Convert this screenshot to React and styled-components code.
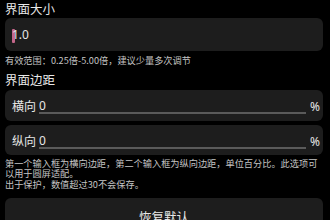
import React from 'react';
import styled, { createGlobalStyle } from 'styled-components';

const Global = createGlobalStyle`
  html, body {
    margin: 0;
    padding: 0;
    background: #000;
  }
  body {
    font-family: "Noto Sans CJK SC", "Noto Sans", sans-serif;
    color: #e6e6e6;
  }
`;

const Page = styled.div`
  display: flex;
  flex-direction: column;
  padding: 1px 7px 0 5px;
  height: 220px;
  box-sizing: border-box;
  overflow: hidden;
`;

const Heading = styled.div`
  font-size: 12.5px;
  line-height: 15px;
  color: #e8e8e8;
  margin-top: ${({ $gap }) => $gap || 0}px;
`;

const Box = styled.div`
  display: flex;
  align-items: ${({ $top }) => ($top ? 'flex-start' : 'center')};
  background: #1d1d1d;
  border-radius: 6px;
  height: ${({ $h }) => $h}px;
  margin-top: ${({ $gap }) => $gap}px;
  padding: 0 3px 0 7px;
  box-sizing: border-box;
  flex-shrink: 0;
  font-size: 12px;
  color: #e6e6e6;
`;

const Caret = styled.span`
  display: inline-block;
  width: 3px;
  height: 14px;
  margin-right: -3px;
  background: #c4668a;
  vertical-align: middle;
  border-radius: 1px;
`;

const Value = styled.span`
  font-family: "Noto Sans", sans-serif;
  font-size: 12px;
`;

const Hint = styled.div`
  font-size: 9.2px;
  line-height: 10.7px;
  color: #c4c4c4;
  margin-top: ${({ $gap }) => $gap}px;
`;

const Label = styled.span`
  font-size: 12px;
  line-height: 16px;
  margin-top: 8px;
`;

const Field = styled.div`
  flex: 1;
  margin: 0 4px 0 3px;
  padding-top: 8px;
  height: 24px;
  box-sizing: border-box;
  border-bottom: 2px solid #5a5a5a;
  font-family: "Noto Sans", sans-serif;
  font-size: 12px;
  line-height: 16px;
`;

const Unit = styled.span`
  font-family: "Noto Sans", sans-serif;
  font-size: 12px;
  line-height: 16px;
  margin-top: 9px;
`;

const Button = styled.div`
  display: flex;
  justify-content: center;
  align-items: flex-end;
  padding-bottom: 2px;
  box-sizing: border-box;
  background: #1d1d1d;
  border-radius: 6px;
  height: 30px;
  margin-top: 8px;
  flex-shrink: 0;
  font-size: 12.5px;
  color: #e8e8e8;
`;

const MarginRow = ({ label, gap, h }) => (
  <Box $top $gap={gap} $h={h}>
    <Label>{label}</Label>
    <Field>0</Field>
    <Unit>%</Unit>
  </Box>
);

export default function App() {
  return (
    <>
      <Global />
      <Page>
        <Heading>界面大小</Heading>
        <Box $gap={2} $h={33}>
          <Value>
            <Caret />1.0
          </Value>
        </Box>
        <Hint $gap={4}>有效范围：0.25倍-5.00倍，建议少量多次调节</Hint>
        <Heading $gap={6}>界面边距</Heading>
        <MarginRow label="横向" gap={3} h={31} />
        <MarginRow label="纵向" gap={4} h={30} />
        <Hint $gap={3}>
          第一个输入框为横向边距，第二个输入框为纵向边距，单位百分比。此选项可以用于圆屏适配。
          <br />
          出于保护，数值超过30不会保存。
        </Hint>
        <Button>恢复默认</Button>
      </Page>
    </>
  );
}
